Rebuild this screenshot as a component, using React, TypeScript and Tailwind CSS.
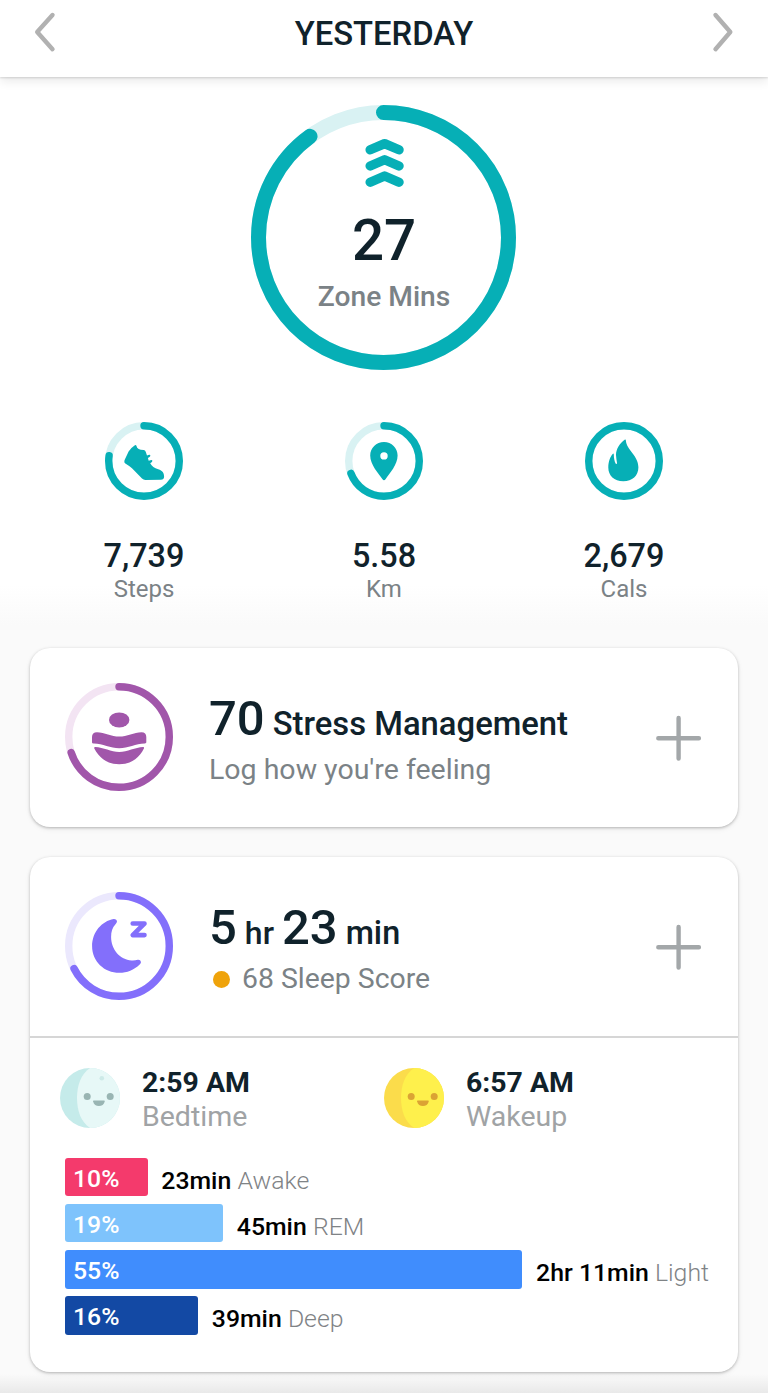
import React from "react";

type RingProps = {
  size: number;
  stroke: number;
  percent: number;
  color: string;
  track: string;
  children?: React.ReactNode;
};

const TEAL = "#06afb6";
const TEAL_TRACK = "#d9f2f3";

const Ring = ({ size, stroke, percent, color, track, children }: RingProps) => {
  const c = size / 2;
  const r = (size - stroke) / 2;
  return (
    <div className="grid shrink-0 place-items-center">
      <svg width={size} height={size} className="col-start-1 row-start-1">
        <circle cx={c} cy={c} r={r} fill="none" stroke={track} strokeWidth={stroke} />
        <circle
          cx={c}
          cy={c}
          r={r}
          fill="none"
          stroke={color}
          strokeWidth={stroke}
          strokeLinecap="round"
          pathLength={100}
          strokeDasharray={percent >= 100 ? undefined : `${percent} 100`}
          transform={`rotate(-90 ${c} ${c})`}
        />
      </svg>
      <div className="col-start-1 row-start-1">{children}</div>
    </div>
  );
};

const ZoneIcon = () => (
  <svg width="40" height="50" viewBox="0 0 40 50" fill="none" stroke={TEAL} strokeWidth="9.4" strokeLinecap="round" strokeLinejoin="round" className="ml-px">
    <path d="M6.2 11.8 L20.6 5.6 L35 11.8" />
    <path d="M6.2 28 L20.6 21.8 L35 28" />
    <path d="M6.2 44.2 L20.6 38 L35 44.2" />
  </svg>
);

const ShoeIcon = () => (
  <svg width="78" height="78" viewBox="0 0 78 78" className="block">
    <path
      d="M31.4 23.8 C32 26.8 34.4 28 38.6 28 Q40.3 28.2 40.7 29.8 L42 33.6 L44.2 32.8 Q45.6 32.7 45.3 34 Q45 34.8 42.9 36 L43.7 38.8 L46.3 37.9 Q47.7 37.9 47.3 39.2 Q47 40 45.2 41.2 C46.8 44.4 49.4 46 53.2 47.2 C57.6 48.6 59 51 59.1 54.4 Q59 57.5 55.8 57.8 L40.3 57.9 Q38.6 57.8 37 56.4 L29.2 48.6 C26.2 45.4 23.6 43.4 20.3 41.6 Q18.7 40.3 19.5 38.2 L23.6 29.4 Q25.4 26.2 29.9 23.2 Q31.1 22.8 31.4 23.8 Z"
      fill={TEAL}
    />
  </svg>
);

const PinIcon = () => (
  <svg width="78" height="78" viewBox="0 0 78 78" className="block">
    <path
      fillRule="evenodd"
      d="M39 20 C31.3 20 25.2 26 25.2 33.6 C25.2 43 33.5 51.5 37.3 57 Q39 59.4 40.7 57 C44.5 51.5 52.6 43 52.6 33.6 C52.6 26 46.6 20 39 20 Z M39 30.2 A3.7 3.7 0 1 1 39 37.6 A3.7 3.7 0 1 1 39 30.2 Z"
      fill={TEAL}
    />
  </svg>
);

const FlameIcon = () => (
  <svg width="78" height="78" viewBox="0 0 78 78" className="block">
    <path
      d="M40 17.6 Q40.6 17.2 40.8 18 C41.5 28.5 53.4 33.2 53.4 45.3 C53.4 54 47.3 59.2 38.3 59.2 C29.2 59.2 23.3 53.6 23.3 45.5 C23.3 39.6 25.3 34.6 27.7 32 Q28.6 31 28.8 32.4 C28.8 36.4 29.5 39 30.6 41.5 Q31.2 42.3 32.1 41.6 Q31.3 37.6 31 33 C31 27.5 34.6 21.4 40 17.6 Z"
      fill={TEAL}
    />
  </svg>
);

const StressIcon = () => (
  <svg width="108" height="108" viewBox="0 0 108 108" className="block" fill="#a156aa">
    <ellipse cx="54.2" cy="36.9" rx="10.2" ry="7.5" />
    <path d="M32 49.2 C39.5 49.6 46.5 53.5 54.2 53.5 C62 53.5 69 49.6 76.5 49.2 Q81.3 49.2 81.3 54 V59.6 Q81.1 60.6 79.5 60.4 C71 60.4 63 65.2 54.2 65.2 C45.5 65.2 37.5 60.4 29 60.4 Q27.1 60.6 27 59.4 V54 Q27 49.2 32 49.2 Z" />
    <path d="M30.3 64 C38.5 64.3 46 68.9 54.2 68.9 C62.5 68.9 70 64.3 78.2 64 Q79.5 64 78.9 65.4 C74 75.5 65.5 81.2 54.2 81.2 C43 81.2 34.5 75.5 29.3 65.4 Q28.8 64 30.3 64 Z" />
  </svg>
);

const SleepIcon = () => (
  <svg width="108" height="108" viewBox="0 0 108 108" className="block">
    <path
      d="M48.7 26.9 Q51.8 26.8 52 29.6 Q52 30.7 50.3 32.6 C47.3 35.8 46.1 39.8 46.1 45 C46.1 57.5 55 67.8 66.5 68.4 Q70 68.6 72.8 67.8 Q75.5 67.5 76 70 Q76 71.3 74.7 72.4 C69 77.8 62 80.8 54.4 80.8 C39.1 80.8 27.1 69.2 27.1 54.2 C27.1 40 36.8 29 48.7 26.9 Z"
      fill="#836ffb"
    />
    <path d="M67.7 31.5 H79.5 L67.7 43.1 H79.5" fill="none" stroke="#836ffb" strokeWidth="4.6" strokeLinecap="round" strokeLinejoin="round" />
  </svg>
);

type FaceProps = { dark: string; light: string; features: string; crater?: string };

const Face = ({ dark, light, features, crater }: FaceProps) => (
  <svg width="60" height="60" viewBox="0 0 60 60" className="mt-[1.5px] shrink-0">
    <circle cx="30" cy="30" r="30" fill={dark} />
    <path d="M30 0 A30 30 0 0 1 30 60 C21 54 17 43 17 30 C17 17 21 6 30 0 Z" fill={light} />
    {crater && <circle cx="41.8" cy="10.2" r="2.3" fill={crater} />}
    <circle cx="27.2" cy="28.4" r="3.5" fill={features} />
    <circle cx="50.2" cy="28.4" r="3.5" fill={features} />
    <path d="M33.6 32.6 H44.2 Q44.8 32.6 44.7 33.4 C44 36.4 41.8 37.9 38.9 37.9 C36 37.9 33.8 36.4 33.1 33.4 Q33 32.6 33.6 32.6 Z" fill={features} />
  </svg>
);

const Plus = () => (
  <svg width="46" height="46" viewBox="0 0 46 46" stroke="#a3a7a9" strokeWidth="4.4" strokeLinecap="round" className="mt-[1px] mr-[36.5px] ml-auto shrink-0">
    <path d="M22.6 3 V43.6 M2.3 23.3 H42.9" />
  </svg>
);

const stats = [
  { value: "7,739", label: "Steps", percent: 77.4, icon: <ShoeIcon /> },
  { value: "5.58", label: "Km", percent: 69.3, icon: <PinIcon /> },
  { value: "2,679", label: "Cals", percent: 100, icon: <FlameIcon /> },
];

const stages = [
  { percent: "10%", width: 82.5, time: "23min", label: "Awake", bg: "bg-[#f43a6c]" },
  { percent: "19%", width: 158, time: "45min", label: "REM", bg: "bg-[#7ec3fc]" },
  { percent: "55%", width: 457.3, time: "2hr 11min", label: "Light", bg: "bg-[#408dfd]" },
  { percent: "16%", width: 133, time: "39min", label: "Deep", bg: "bg-[#1349a4]" },
];

const App = () => {
  return (
    <div className="flex h-[1393px] w-[768px] flex-col overflow-hidden bg-[linear-gradient(to_bottom,#fff_585px,#fafafa_625px,#fafafa_1374px,#e9e9e9_1393px)] font-['Roboto',sans-serif] text-[#10222b]">
      {/* Header */}
      <header className="z-10 flex h-[76.5px] shrink-0 justify-between bg-white px-[33px] shadow-[0_1px_2px_rgba(0,0,0,0.14),0_4px_10px_rgba(0,0,0,0.09)]">
        <svg width="24" height="42" viewBox="0 0 24 42" fill="none" stroke="#b1b1b1" strokeWidth="4.4" strokeLinecap="round" strokeLinejoin="round" className="mt-[11px]">
          <path d="M19.5 4 L4.2 21 L19.5 38.2" />
        </svg>
        <h1 className="mt-[14px] text-[32.8px] leading-[40px] font-medium">YESTERDAY</h1>
        <svg width="24" height="42" viewBox="0 0 24 42" fill="none" stroke="#b1b1b1" strokeWidth="4.4" strokeLinecap="round" strokeLinejoin="round" className="mt-[10.5px]">
          <path d="M4.5 4 L19.3 21 L4.5 38.2" />
        </svg>
      </header>

      {/* Daily totals */}
      <section className="flex h-[571.5px] shrink-0 flex-col pt-[28px]">
        <div className="pr-px">
          <Ring size={265} stroke={15} percent={90} color={TEAL} track={TEAL_TRACK}>
            <div className="flex h-[265px] flex-col items-center pt-[33px]">
              <ZoneIcon />
              <div className="mt-[23.5px] ml-px text-[56.5px] leading-[60px] font-medium">27</div>
              <div className="mt-[9.5px] ml-px text-[28.2px] leading-[32px] font-medium text-[#7b8286]">Zone Mins</div>
            </div>
          </Ring>
        </div>
        <div className="mt-[52.5px] grid grid-cols-3 px-6">
          {stats.map((stat) => (
            <div key={stat.label} className="flex flex-col items-center">
              <Ring size={78} stroke={7.4} percent={stat.percent} color={TEAL} track={TEAL_TRACK}>
                {stat.icon}
              </Ring>
              <div className="mt-[37.5px] text-[32.4px] leading-[36px] font-medium">{stat.value}</div>
              <div className="mt-[1px] text-[24px] leading-[28px] text-[#7b8286]">{stat.label}</div>
            </div>
          ))}
        </div>
      </section>

      {/* Stress card */}
      <section className="mx-[30px] flex h-[179px] shrink-0 items-center rounded-[20px] bg-white pb-[1px] pl-[35px] shadow-[0_1px_3px_rgba(0,0,0,0.25),0_2px_6px_rgba(0,0,0,0.06)]">
        <Ring size={108} stroke={7.4} percent={70} color="#a156aa" track="#f3e4f3">
          <StressIcon />
        </Ring>
        <div className="ml-[36px] pt-[3px]">
          <div className="flex items-baseline gap-[8px] leading-[56px] font-medium">
            <span className="text-[49px]">70</span>
            <span className="text-[32.8px]">Stress Management</span>
          </div>
          <div className="mt-[1px] text-[28.5px] leading-[34px] text-[#7b8286]">Log how you're feeling</div>
        </div>
        <Plus />
      </section>

      {/* Sleep card */}
      <section className="mx-[30px] mt-[30px] h-[515px] shrink-0 rounded-[20px] bg-white shadow-[0_1px_3px_rgba(0,0,0,0.25),0_2px_6px_rgba(0,0,0,0.06)]">
        <div className="flex h-[181px] items-center border-b-2 border-[#d6d6d6] pb-[1px] pl-[35px]">
          <Ring size={108} stroke={7.4} percent={67.6} color="#836ffb" track="#ebe8fd">
            <SleepIcon />
          </Ring>
          <div className="ml-[36px] pt-[3px]">
            <div className="flex items-baseline gap-[8px] leading-[56px] font-medium">
              <span className="text-[49px]">5</span>
              <span className="text-[32px]">hr</span>
              <span className="text-[49px]">23</span>
              <span className="text-[32.4px]">min</span>
            </div>
            <div className="mt-[1px] flex items-center text-[28.4px] leading-[34px] text-[#7b8286]">
              <span className="mt-[1px] mr-[12px] ml-[4px] size-[17px] rounded-full bg-[#efa30b]" />
              68 Sleep Score
            </div>
          </div>
          <Plus />
        </div>

        <div className="grid grid-cols-[324px_324px] pt-[28px] pl-[29.5px]">
          <div className="flex gap-[22.5px]">
            <Face dark="#c5ebea" light="#e7f8f7" features="#99b5b3" crater="#cdeae8" />
            <div className="leading-[34px]">
              <div className="text-[28.4px] font-bold">2:59 AM</div>
              <div className="text-[28.5px] text-[#a0a3a5]">Bedtime</div>
            </div>
          </div>
          <div className="flex gap-[22.5px]">
            <Face dark="#fbdc4b" light="#fef04c" features="#dba334" />
            <div className="leading-[34px]">
              <div className="text-[28.4px] font-bold">6:57 AM</div>
              <div className="text-[28.5px] text-[#a0a3a5]">Wakeup</div>
            </div>
          </div>
        </div>

        <div className="mt-[23.5px] flex flex-col gap-[7.8px] pl-[35px]">
          {stages.map((stage) => (
            <div key={stage.label} className="flex h-[38.5px]">
              <div
                className={`${stage.bg} shrink-0 rounded-[3px] pt-[2px] pl-[8px] text-[24.8px] leading-[38px] font-medium text-white`}
                style={{ width: stage.width }}
              >
                {stage.percent}
              </div>
              <div className="ml-[13.8px] pt-[4px] text-[24.8px] leading-[38px] whitespace-nowrap">
                <span className="font-medium text-black">{stage.time}</span>{" "}
                <span className="font-light text-[#7f8386]">{stage.label}</span>
              </div>
            </div>
          ))}
        </div>
      </section>
    </div>
  );
};

export default App;
